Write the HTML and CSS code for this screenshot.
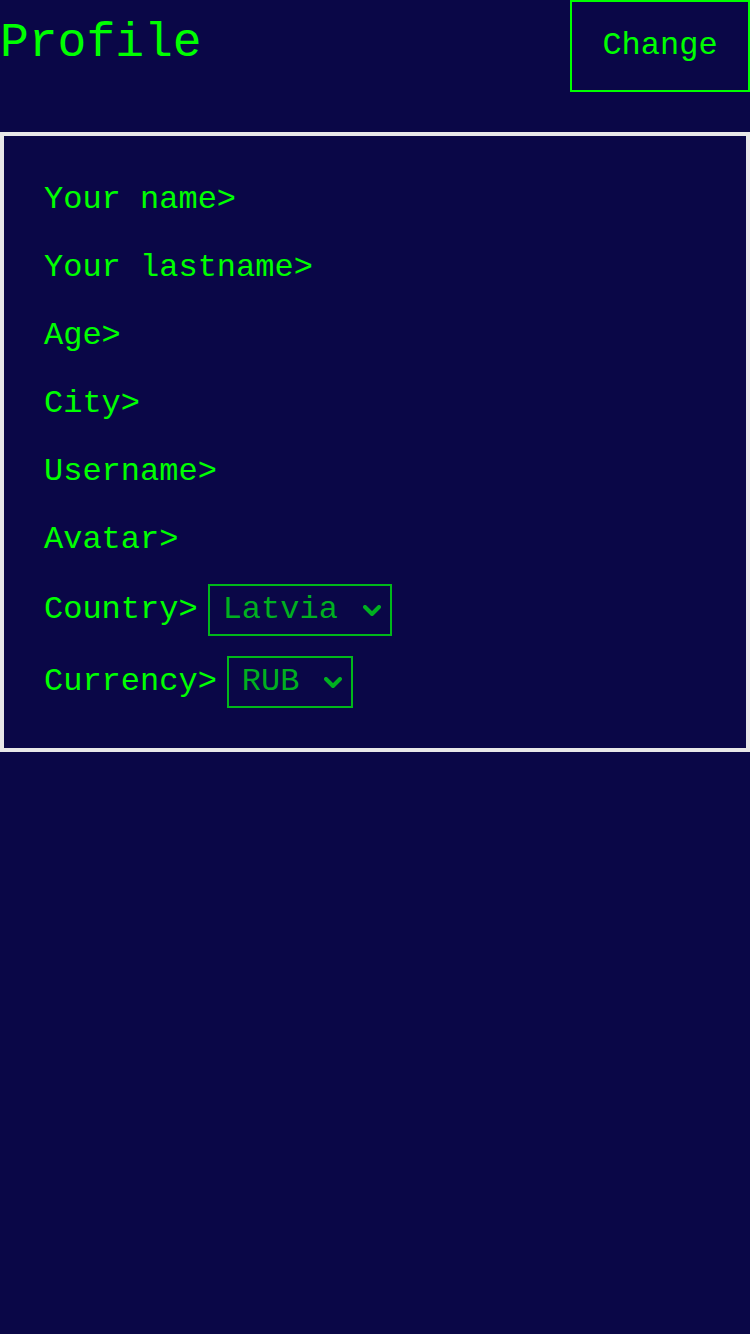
FILE: index.html
```html
<!DOCTYPE html>
<html>
<head>
<meta charset="utf-8">
<link rel="stylesheet" href="styles.css">
</head>
<body>
<header class="top">
  <h1 class="title">Profile</h1>
  <button class="change-btn">Change</button>
</header>
<section class="panel">
  <div class="row">Your name&gt;</div>
  <div class="row">Your lastname&gt;</div>
  <div class="row">Age&gt;</div>
  <div class="row">City&gt;</div>
  <div class="row">Username&gt;</div>
  <div class="row">Avatar&gt;</div>
  <div class="row row-select row-country">
    <span>Country&gt;</span>
    <div class="select">
      <span class="select-value">Latvia</span>
      <svg class="chev" width="18" height="12" viewBox="0 0 18 12"><path d="M2 2 L9 9 L16 2" fill="none" stroke="currentColor" stroke-width="4" stroke-linecap="round" stroke-linejoin="round"/></svg>
    </div>
  </div>
  <div class="row row-select row-currency">
    <span>Currency&gt;</span>
    <div class="select">
      <span class="select-value">RUB</span>
      <svg class="chev" width="18" height="12" viewBox="0 0 18 12"><path d="M2 2 L9 9 L16 2" fill="none" stroke="currentColor" stroke-width="4" stroke-linecap="round" stroke-linejoin="round"/></svg>
    </div>
  </div>
</section>
</body>
</html>
```
FILE: styles.css
```css
html, body {
  margin: 0;
  padding: 0;
  background: #0a0747;
}
body {
  width: 750px;
  height: 1334px;
  color: #00ff00;
  font-family: "Liberation Mono", monospace;
}
.top {
  display: flex;
  justify-content: space-between;
  align-items: flex-start;
  height: 132px;
}
.title {
  margin: 0;
  padding-top: 15px;
  font-family: "Liberation Mono", monospace;
  font-weight: normal;
  font-size: 48px;
  line-height: 56px;
  color: #00ff00;
}
.change-btn {
  box-sizing: border-box;
  width: 180px;
  height: 92px;
  margin: 0;
  padding: 0 0 2px 0;
  background: transparent;
  border: 2px solid #00ff00;
  color: #00ff00;
  font-family: "Liberation Mono", monospace;
  font-size: 32px;
}
.panel {
  border: 4px solid #e8e8e8;
  padding: 46px 40px 40px 40px;
  display: flex;
  flex-direction: column;
  gap: 32px;
}
.row {
  font-size: 32px;
  line-height: 36px;
  height: 36px;
  display: flex;
  align-items: center;
  white-space: pre;
}
.row-select {
  height: 52px;
}
.row-country {
  margin-top: -6px;
}
.row-currency {
  margin-top: -12px;
}
.select {
  box-sizing: border-box;
  height: 52px;
  margin-left: 10px;
  border: 2px solid #00b81a;
  color: #00b020;
  display: flex;
  align-items: center;
  padding: 0 9px 0 13px;
  gap: 25px;
}
.select-value {
  font-size: 32px;
  line-height: 36px;
}
.chev {
  display: block;
  margin-top: 2px;
}
```
